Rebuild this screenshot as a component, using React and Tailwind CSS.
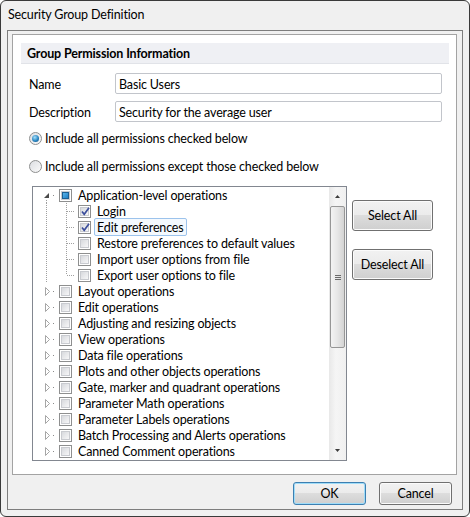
import React from 'react'

const font = { fontFamily: 'Lato, "Noto Sans", sans-serif' }

const Check = ({ state }) => (
  <span className="relative w-[13px] h-[13px] shrink-0 border border-[#8e8f8f] bg-white p-[1px] flex">
    <span className="flex-1 border border-[#c9cbd0] bg-[linear-gradient(135deg,#d7d9dd,#f7f7f8)]" />
    {state === 'checked' && (
      <svg className="absolute left-[1px] top-[0px]" width="11" height="11" viewBox="0 0 11 11">
        <path d="M2 5.5 L4.2 8.3 L9 1.8" fill="none" stroke="#3d4f9c" strokeWidth="1.7" />
      </svg>
    )}
    {state === 'mixed' && (
      <span className="absolute left-[2px] top-[2px] w-[7px] h-[7px] border border-[#1c5f92] bg-[linear-gradient(135deg,#5ab4ea,#1f7fc4)]" />
    )}
  </span>
)

const Radio = ({ on }) => (
  <span className="w-[13px] h-[13px] shrink-0 rounded-full border border-[#8e8f8f] bg-[linear-gradient(135deg,#dcdee2,#fafafa)] flex items-center justify-center">
    {on && <span className="w-[7px] h-[7px] rounded-full bg-[radial-gradient(circle_at_40%_35%,#a6e0fb,#2a86c2_55%,#0c4a7a)]" />}
  </span>
)

const Btn = ({ children, def, className = '' }) => (
  <button
    className={`flex items-center justify-center pt-[2px] rounded-[3px] border text-[12.5px] text-black bg-[linear-gradient(#f2f2f2_0%,#ebebeb_49%,#dddddd_50%,#cfcfcf_100%)] ${def ? 'border-[#3c7fb1] shadow-[inset_0_0_0_1px_#9fdcf8]' : 'border-[#707070] shadow-[inset_0_0_0_1px_#fbfbfb]'} ${className}`}
  >
    {children}
  </button>
)

const Expanded = () => (
  <svg width="26" height="16" viewBox="0 0 26 16" className="shrink-0">
    <path d="M11 11 L16 11 L16 6 Z" fill="#4a4a4a" />
    <rect x="20" y="8" width="1" height="1" fill="#8a8a8a" />
    <line x1="13.5" y1="13" x2="13.5" y2="16" stroke="#a0a0a0" strokeDasharray="1 1" />
  </svg>
)

const Collapsed = () => (
  <svg width="26" height="16" viewBox="0 0 26 16" className="shrink-0">
    <path d="M12.5 4.5 L16.5 8.5 L12.5 12.5 Z" fill="none" stroke="#a6a6a6" />
    <rect x="20" y="8" width="1" height="1" fill="#8a8a8a" />
  </svg>
)

const ChildLines = ({ last }) => (
  <svg width="45" height="16" viewBox="0 0 45 16" className="shrink-0">
    <line x1="13.5" y1="0" x2="13.5" y2="16" stroke="#a0a0a0" strokeDasharray="1 1" />
    <line x1="33.5" y1="0" x2="33.5" y2={last ? 8 : 16} stroke="#a0a0a0" strokeDasharray="1 1" />
    <line x1="34" y1="8.5" x2="42" y2="8.5" stroke="#a0a0a0" strokeDasharray="1 1" />
  </svg>
)

const children = [
  { label: 'Login', state: 'checked' },
  { label: 'Edit preferences', state: 'checked', selected: true },
  { label: 'Restore preferences to default values' },
  { label: 'Import user options from file' },
  { label: 'Export user options to file' },
]

const groups = [
  'Layout operations',
  'Edit operations',
  'Adjusting and resizing objects',
  'View operations',
  'Data file operations',
  'Plots and other objects operations',
  'Gate, marker and quadrant operations',
  'Parameter Math operations',
  'Parameter Labels operations',
  'Batch Processing and Alerts operations',
  'Canned Comment operations',
]

const Scrollbar = () => (
  <div className="w-[17px] shrink-0 bg-[linear-gradient(90deg,#e8e8e8,#f5f5f5_40%,#f0f0f0)] flex flex-col items-center">
    <svg width="17" height="17" viewBox="0 0 17 17" className="shrink-0">
      <path d="M6 11 L8.5 8 L11 11 Z" fill="#3c3c3c" />
    </svg>
    <div className="mt-[2px] w-[15px] h-[142px] rounded-[2px] border border-[#969696] bg-[linear-gradient(90deg,#f3f3f3,#e6e6e6_50%,#d4d4d4)] flex flex-col items-center justify-center gap-[1px]">
      <span className="w-[6px] h-[1px] bg-[#6a6a6a]" />
      <span className="w-[6px] h-[1px] bg-[#6a6a6a]" />
      <span className="w-[6px] h-[1px] bg-[#6a6a6a]" />
    </div>
    <div className="flex-1" />
    <svg width="17" height="17" viewBox="0 0 17 17" className="shrink-0">
      <path d="M6 6 L8.5 9 L11 6 Z" fill="#3c3c3c" />
    </svg>
  </div>
)

export default function App() {
  return (
    <div style={font} className="w-[470px] h-[517px] border border-[#3a3a3a] rounded-[6px] bg-[#f0f0f0] flex flex-col text-[12.5px] tracking-[-0.15px] text-black leading-none overflow-hidden">
      <div className="h-[29px] shrink-0 flex items-center pl-[7px]">Security Group Definition</div>

      <div className="mx-[6px] h-[480px] border border-[#7d7d7d] flex flex-col">
        <div className="mt-[3px] ml-[4px] mr-[5px] h-[441px] border border-[#a3a3a3] bg-white flex flex-col">
          <div className="mt-[8px] ml-[8px] mr-[7px] h-[21px] bg-[#eff0f4] border-b border-[#e1e3e8] flex items-center pl-[6px] pt-[3px] font-bold">
            Group Permission Information
          </div>

          <div className="mt-[9px] flex items-center pl-[16px]">
            <span className="w-[86px] pt-[3px]">Name</span>
            <div className="w-[327px] h-[21px] border border-[#c2c5cb] rounded-[2px] flex items-center pl-[3px] pt-[3px]">Basic Users</div>
          </div>
          <div className="mt-[7px] flex items-center pl-[16px]">
            <span className="w-[86px] pt-[3px]">Description</span>
            <div className="w-[327px] h-[21px] border border-[#c2c5cb] rounded-[2px] flex items-center pl-[3px] pt-[3px]">Security for the average user</div>
          </div>

          <div className="mt-[8px] h-[16px] flex items-center pl-[16px] gap-[3px]">
            <Radio on />
            <span className="pt-[2px]">Include all permissions checked below</span>
          </div>
          <div className="mt-[12px] h-[16px] flex items-center pl-[16px] gap-[3px]">
            <Radio />
            <span className="pt-[2px]">Include all permissions except those checked below</span>
          </div>

          <div className="mt-[12px] flex gap-[5px] pl-[19px]">
            <div className="w-[315px] h-[275px] border border-[#828790] flex">
              <div className="flex-1 flex flex-col overflow-hidden">
                <div className="h-[16px] flex items-center">
                  <Expanded />
                  <Check state="mixed" />
                  <span className="ml-[6px] pt-[3px]">Application-level operations</span>
                </div>
                {children.map((c, i) => (
                  <div key={c.label} className="h-[16px] flex items-center">
                    <ChildLines last={i === children.length - 1} />
                    <Check state={c.state} />
                    <span className={`ml-[3px] h-[18px] flex items-center px-[2px] pt-[3px] rounded-[2px] border ${c.selected ? 'border-[#9cc3ec] bg-[#f4f9fe]' : 'border-transparent'}`}>
                      {c.label}
                    </span>
                  </div>
                ))}
                {groups.map(g => (
                  <div key={g} className="h-[16px] flex items-center">
                    <Collapsed />
                    <Check />
                    <span className="ml-[6px] pt-[3px]">{g}</span>
                  </div>
                ))}
              </div>
              <Scrollbar />
            </div>

            <div className="flex flex-col pt-[14px] gap-[18px]">
              <Btn className="w-[81px] h-[31px]">Select All</Btn>
              <Btn className="w-[81px] h-[31px]">Deselect All</Btn>
            </div>
          </div>
        </div>

        <div className="mt-[7px] flex justify-end gap-[13px] pr-[10px]">
          <Btn def className="w-[73px] h-[23px]">OK</Btn>
          <Btn className="w-[73px] h-[23px]">Cancel</Btn>
        </div>
      </div>
    </div>
  )
}
